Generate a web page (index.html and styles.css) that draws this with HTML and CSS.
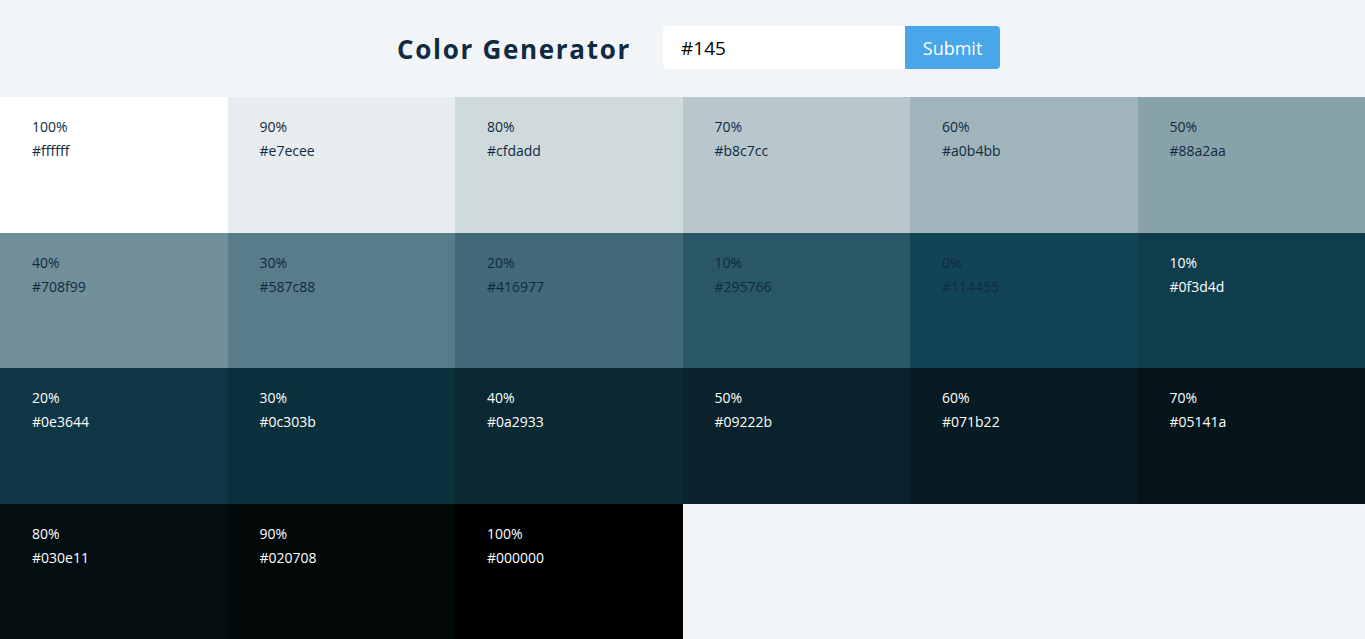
FILE: index.html
```html
<!DOCTYPE html>
<html lang="en">
<head>
    <meta charset="UTF-8">
    <meta name="viewport" content="width=device-width, initial-scale=1.0">
    <title>Color Generator</title>
    <link rel="stylesheet" href="styles.css">
</head>
<body>
    <section class="container">
        <h3>Color Generator</h3>
        <form class="picker">
            <input type="text" value="#145" placeholder="#f15025">
            <button class="btn" type="button">Submit</button>
        </form>
    </section>
    <section class="colors">
        <article class="color" style="background-color: #ffffff"><p class="percent">100%</p><p class="hex">#ffffff</p></article>
        <article class="color" style="background-color: #e7ecee"><p class="percent">90%</p><p class="hex">#e7ecee</p></article>
        <article class="color" style="background-color: #cfdadd"><p class="percent">80%</p><p class="hex">#cfdadd</p></article>
        <article class="color" style="background-color: #b8c7cc"><p class="percent">70%</p><p class="hex">#b8c7cc</p></article>
        <article class="color" style="background-color: #a0b4bb"><p class="percent">60%</p><p class="hex">#a0b4bb</p></article>
        <article class="color" style="background-color: #88a2aa"><p class="percent">50%</p><p class="hex">#88a2aa</p></article>
        <article class="color" style="background-color: #708f99"><p class="percent">40%</p><p class="hex">#708f99</p></article>
        <article class="color" style="background-color: #587c88"><p class="percent">30%</p><p class="hex">#587c88</p></article>
        <article class="color" style="background-color: #416977"><p class="percent">20%</p><p class="hex">#416977</p></article>
        <article class="color" style="background-color: #295766"><p class="percent">10%</p><p class="hex">#295766</p></article>
        <article class="color" style="background-color: #114455"><p class="percent">0%</p><p class="hex">#114455</p></article>
        <article class="color light" style="background-color: #0f3d4d"><p class="percent">10%</p><p class="hex">#0f3d4d</p></article>
        <article class="color light" style="background-color: #0e3644"><p class="percent">20%</p><p class="hex">#0e3644</p></article>
        <article class="color light" style="background-color: #0c303b"><p class="percent">30%</p><p class="hex">#0c303b</p></article>
        <article class="color light" style="background-color: #0a2933"><p class="percent">40%</p><p class="hex">#0a2933</p></article>
        <article class="color light" style="background-color: #09222b"><p class="percent">50%</p><p class="hex">#09222b</p></article>
        <article class="color light" style="background-color: #071b22"><p class="percent">60%</p><p class="hex">#071b22</p></article>
        <article class="color light" style="background-color: #05141a"><p class="percent">70%</p><p class="hex">#05141a</p></article>
        <article class="color light" style="background-color: #030e11"><p class="percent">80%</p><p class="hex">#030e11</p></article>
        <article class="color light" style="background-color: #020708"><p class="percent">90%</p><p class="hex">#020708</p></article>
        <article class="color light" style="background-color: #000000"><p class="percent">100%</p><p class="hex">#000000</p></article>
    </section>
</body>
</html>
```

FILE: styles.css
```css
* {
    margin: 0;
    padding: 0;
    box-sizing: border-box;
}
body {
    font-family: "Open Sans", sans-serif;
    background: #f1f5f8;
    color: #102a42;
}
.container {
    height: 97px;
    display: flex;
    align-items: center;
    justify-content: center;
    padding-left: 32px;
}
.container h3 {
    font-size: 26px;
    letter-spacing: 1.7px;
    font-weight: 700;
    margin-right: 32px;
    color: #102a42;
}
.picker {
    display: flex;
    margin-top: -2px;
}
.picker input {
    width: 242px;
    height: 43px;
    border: none;
    border-radius: 4px 0 0 4px;
    padding: 0 18px;
    font-family: "Open Sans", sans-serif;
    font-size: 19px;
    color: #000;
    background: #fff;
    outline: none;
}
.btn {
    width: 95px;
    height: 43px;
    border: none;
    border-radius: 0 4px 4px 0;
    background: #49a6e9;
    color: #fff;
    font-family: "Open Sans", sans-serif;
    font-size: 18px;
    cursor: pointer;
}
.colors {
    height: 542px;
    display: grid;
    grid-template-columns: repeat(6, 1fr);
    grid-template-rows: repeat(4, 1fr);
}
.color {
    padding: 18px 32px;
    font-size: 14px;
    line-height: 24px;
    color: #102a42;
}
.color.light {
    color: #fff;
}
```
